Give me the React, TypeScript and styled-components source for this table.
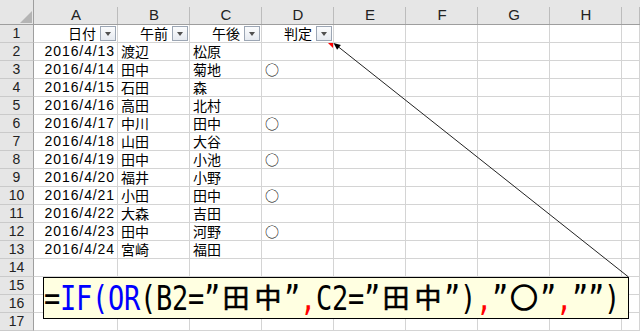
import React from 'react'
import styled, { createGlobalStyle } from 'styled-components'

const GlobalStyle = createGlobalStyle`
  *, *::before, *::after { box-sizing: border-box; }
  html, body { margin: 0; padding: 0; background: #fff; }
  body {
    font-family: 'Noto Sans CJK JP', 'Noto Sans', sans-serif;
    overflow: hidden;
  }
`

const COLS = ['A', 'B', 'C', 'D', 'E', 'F', 'G', 'H', '']
const ROW_COUNT = 17

const rows: [string, string, string][] = [
  ['2016/4/13', '渡辺', '松原'],
  ['2016/4/14', '田中', '菊地'],
  ['2016/4/15', '石田', '森'],
  ['2016/4/16', '高田', '北村'],
  ['2016/4/17', '中川', '田中'],
  ['2016/4/18', '山田', '大谷'],
  ['2016/4/19', '田中', '小池'],
  ['2016/4/20', '福井', '小野'],
  ['2016/4/21', '小田', '田中'],
  ['2016/4/22', '大森', '吉田'],
  ['2016/4/23', '田中', '河野'],
  ['2016/4/24', '宮崎', '福田'],
]

const headers = ['日付', '午前', '午後', '判定']

const BLUE = '#0000ff'
const RED = '#ff0000'
const BLACK = '#000'

// =IF(OR(B2="田中",C2="田中"),"○","")
const formula: [string, string, number?][] = [
  ['=', BLACK], ['I', BLUE], ['F', BLUE], ['(', BLUE], ['O', BLUE], ['R', BLUE],
  ['(', BLACK], ['B', BLACK], ['2', BLACK], ['=', BLACK], ['”', BLACK],
  ['田', BLACK, 0.6], ['中', BLACK, 0.6], ['”', BLACK], [',', RED],
  ['C', BLACK], ['2', BLACK], ['=', BLACK], ['”', BLACK],
  ['田', BLACK, 0.6], ['中', BLACK, 0.6], ['”', BLACK], [')', BLACK], [',', RED],
  ['”', BLACK], ['○', BLACK, 1.6], ['”', BLACK], [',', RED],
  ['”', BLACK], ['”', BLACK], [')', BLACK],
]

const Page = styled.div`
  position: relative;
  width: 640px;
  height: 331px;
  overflow: hidden;
`

const Sheet = styled.div`
  display: grid;
  grid-template-columns: 34px 84px repeat(7, 72px) 1fr;
  grid-template-rows: 25px;
  grid-auto-rows: 18px;
  font-size: 14px;
  color: #000;
`

const Corner = styled.div`
  position: relative;
  background: #e6e6e6;
  border-right: 1px solid #9e9e9e;
  border-bottom: 1px solid #9e9e9e;
  &::after {
    content: '';
    position: absolute;
    right: 1px;
    bottom: 1px;
    width: 12px;
    height: 12px;
    background: #b4b4b4;
    clip-path: polygon(100% 0, 100% 100%, 0 100%);
  }
`

const ColHead = styled.div`
  position: relative;
  background: #e6e6e6;
  border-bottom: 1px solid #9e9e9e;
  text-align: center;
  padding-top: 6px;
  line-height: 18px;
  font-family: 'Liberation Sans', Arial, sans-serif;
  font-size: 15px;
  color: #222;
  &::after {
    content: '';
    position: absolute;
    right: 0;
    top: 7px;
    bottom: 0;
    width: 1px;
    background: #bcbcbc;
  }
`

const RowHead = styled.div`
  background: #e6e6e6;
  border-right: 1px solid #9e9e9e;
  border-bottom: 1px solid #cacaca;
  text-align: center;
  line-height: 17px;
  font-family: 'Liberation Sans', Arial, sans-serif;
  font-size: 14px;
  color: #222;
`

const Cell = styled.div<{ $align?: 'left' | 'right' }>`
  position: relative;
  border-right: 1px solid #d4d4d4;
  border-bottom: 1px solid #d4d4d4;
  line-height: 17px;
  padding: 0 3px;
  text-align: ${(p) => p.$align ?? 'left'};
  white-space: nowrap;
`

const DateCell = styled(Cell)`
  font-family: 'Liberation Sans', Arial, sans-serif;
  letter-spacing: 0.9px;
  padding-right: 2px;
`

const FilterCell = styled(Cell)`
  display: flex;
  justify-content: flex-end;
  align-items: center;
  gap: 4px;
  padding-right: 1px;
`

const FilterButton = styled.span`
  display: flex;
  align-items: center;
  justify-content: center;
  width: 16px;
  height: 15px;
  border: 1px solid #9ca6b4;
  background: linear-gradient(#fbfcfd, #e6eaf0);
  &::before {
    content: '';
    border-left: 3.5px solid transparent;
    border-right: 3.5px solid transparent;
    border-top: 4px solid #505050;
  }
`

const NoteMark = styled.span`
  position: absolute;
  top: 0;
  right: 0;
  width: 0;
  height: 0;
  border-top: 5px solid ${RED};
  border-left: 5px solid transparent;
`

const Comment = styled.div`
  position: absolute;
  left: 43px;
  top: 277px;
  width: 586px;
  height: 42px;
  background: #ffffe1;
  border: 1px solid #000;
  display: flex;
`

const Glyph = styled.span<{ $stroke?: number; $color: string }>`
  display: block;
  flex: none;
  width: ${(p) => (p.$stroke ? 32 : 16)}px;
  height: 40px;
  line-height: 40px;
  text-align: center;
  color: ${(p) => p.$color};
  font-size: 27px;
  font-family: ${(p) => (p.$stroke ? "'Noto Sans CJK JP', sans-serif" : "'DejaVu Sans Mono', monospace")};
  -webkit-text-stroke: ${(p) => p.$stroke ?? 0}px ${(p) => p.$color};
  transform: ${(p) => (p.$stroke ? 'translateY(-1px)' : 'translateY(1.5px) scaleY(1.22)')};
`

const Connector = styled.svg`
  position: absolute;
  left: 0;
  top: 0;
  pointer-events: none;
`

function App() {
  const tail = { x: 628.5, y: 277 }
  const tip = { x: 333.5, y: 43 }
  const dx = tail.x - tip.x
  const dy = tail.y - tip.y
  const len = Math.hypot(dx, dy)
  const ux = dx / len
  const uy = dy / len
  const bx = tip.x + ux * 7
  const by = tip.y + uy * 7
  const head = `${tip.x},${tip.y} ${bx - uy * 3},${by + ux * 3} ${bx + uy * 3},${by - ux * 3}`

  return (
    <Page>
      <GlobalStyle />
      <Sheet>
        <Corner />
        {COLS.map((c, i) => (
          <ColHead key={i}>{c}</ColHead>
        ))}
        {Array.from({ length: ROW_COUNT }, (_, r) => {
          const n = r + 1
          const cells: React.ReactNode[] = []
          if (n === 1) {
            headers.forEach((h) => {
              cells.push(
                <FilterCell key={h}>
                  {h}
                  <FilterButton />
                </FilterCell>,
              )
            })
          } else if (n - 2 < rows.length) {
            const [date, am, pm] = rows[n - 2]
            const judge = am === '田中' || pm === '田中' ? '○' : ''
            cells.push(<DateCell key="a" $align="right">{date}</DateCell>)
            cells.push(<Cell key="b">{am}</Cell>)
            cells.push(<Cell key="c">{pm}</Cell>)
            cells.push(
              <Cell key="d">
                {judge}
                {n === 2 && <NoteMark />}
              </Cell>,
            )
          } else {
            for (let i = 0; i < 4; i++) cells.push(<Cell key={i} />)
          }
          for (let i = 4; i < COLS.length; i++) cells.push(<Cell key={'e' + i} />)
          return (
            <React.Fragment key={n}>
              <RowHead>{n}</RowHead>
              {cells}
            </React.Fragment>
          )
        })}
      </Sheet>
      <Connector width={640} height={331}>
        <line x1={tail.x} y1={tail.y} x2={bx} y2={by} stroke="#222" strokeWidth={1} />
        <polygon points={head} fill="#000" />
      </Connector>
      <Comment>
        {formula.map(([ch, color, stroke], i) => (
          <Glyph key={i} $color={color} $stroke={stroke}>
            {ch}
          </Glyph>
        ))}
      </Comment>
    </Page>
  )
}

export default App
